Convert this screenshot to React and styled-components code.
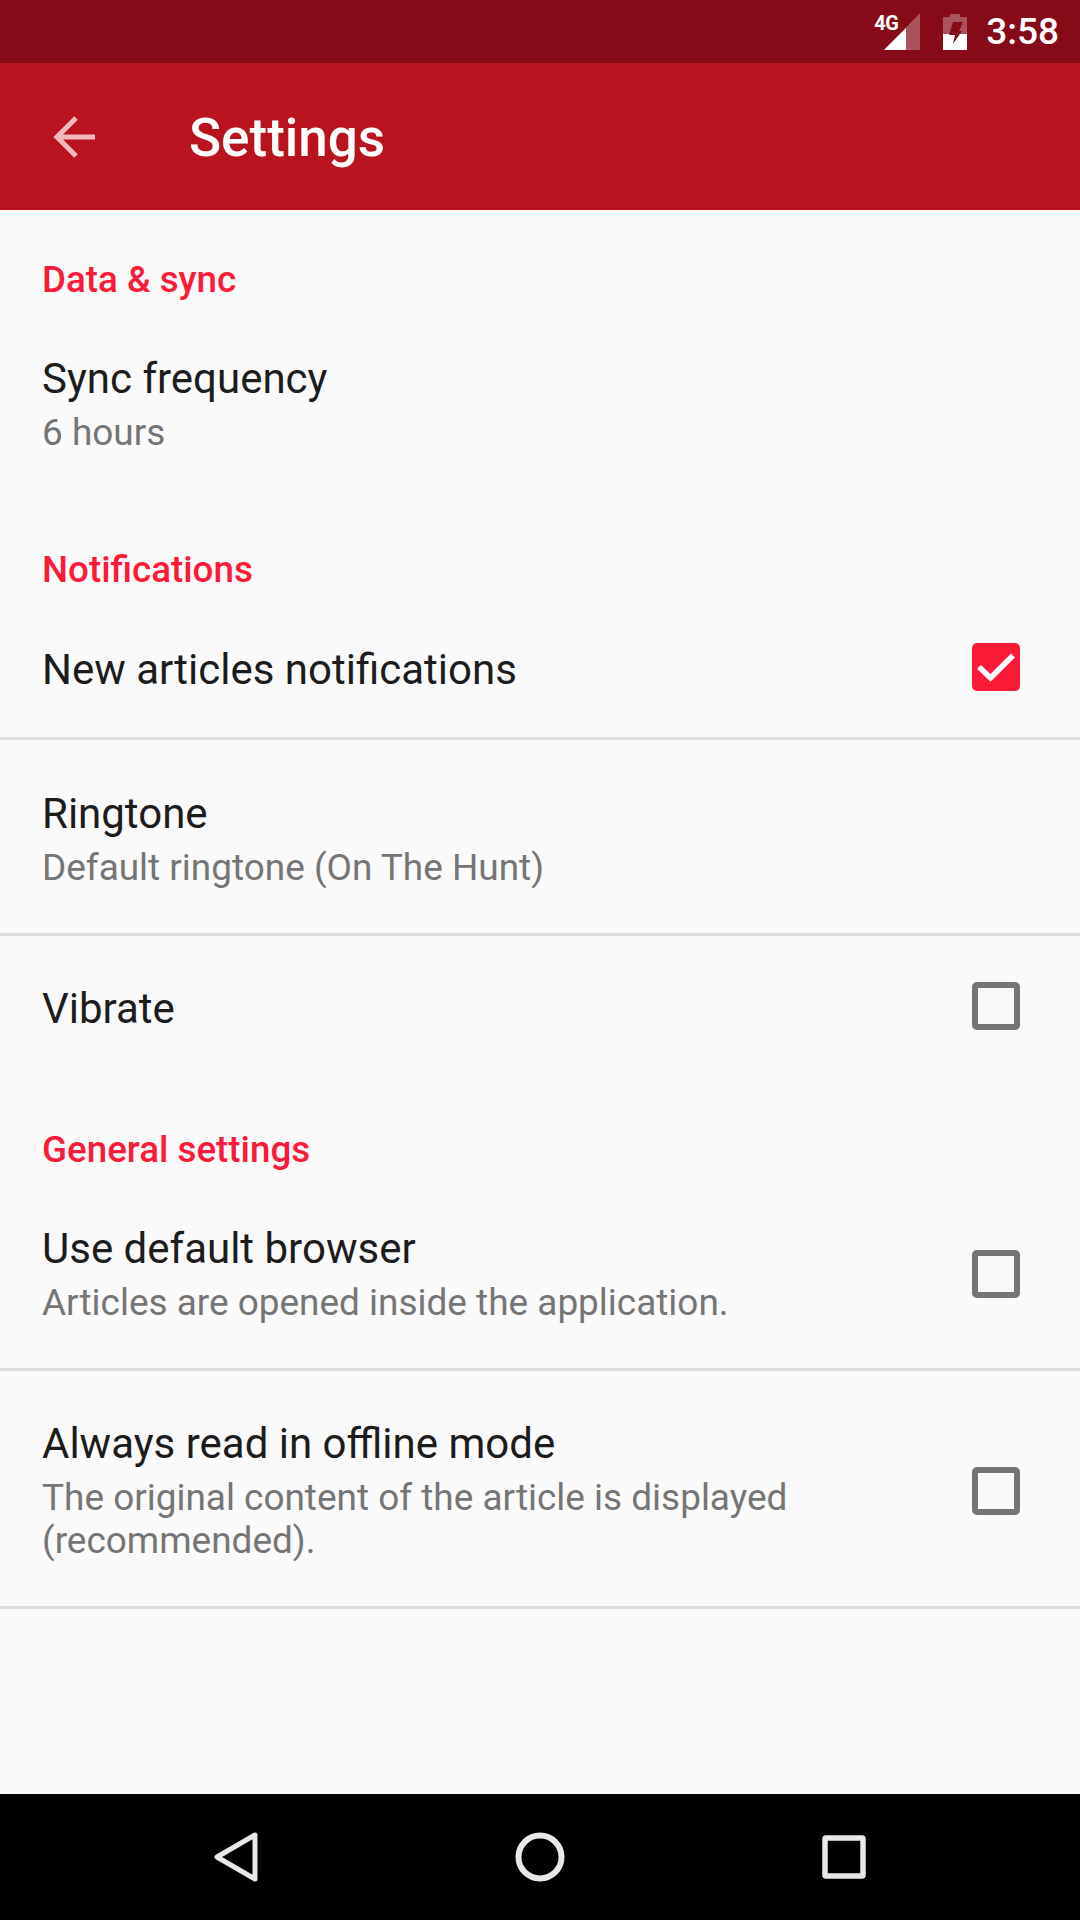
import styled, { createGlobalStyle } from "styled-components";

const GlobalStyle = createGlobalStyle`
  html, body {
    margin: 0;
    padding: 0;
    background: #fafafa;
  }
  * {
    box-sizing: border-box;
  }
`;

const SECTIONS = [
  {
    title: "Data & sync",
    rows: [{ title: "Sync frequency", summary: ["6 hours"], top: 52, bottom: 47 }],
  },
  {
    title: "Notifications",
    rows: [
      {
        title: "New articles notifications",
        check: "on",
        divider: true,
        top: 53,
        bottom: 42,
        shift: -3,
      },
      {
        title: "Ringtone",
        summary: ["Default ringtone (On The Hunt)"],
        divider: true,
        top: 49,
        bottom: 44,
      },
      { title: "Vibrate", check: "off", top: 48, bottom: 47, shift: -3 },
    ],
  },
  {
    title: "General settings",
    rows: [
      {
        title: "Use default browser",
        summary: ["Articles are opened inside the application."],
        check: "off",
        divider: true,
        top: 52,
        bottom: 44,
      },
      {
        title: "Always read in offline mode",
        summary: ["The original content of the article is displayed", "(recommended)."],
        check: "off",
        divider: true,
        top: 48,
        bottom: 44,
      },
    ],
  },
];

const Checkbox = ({ on, shift }) => (
  <CheckBox $on={on} $shift={shift || 0}>
    {on && (
      <svg width="48" height="48" viewBox="0 0 48 48">
        <path d="M7 24 L18.5 35 L41 12.5" fill="none" stroke="#fff" strokeWidth="5.5" />
      </svg>
    )}
  </CheckBox>
);

const App = () => {
  return (
    <Page>
      <GlobalStyle />
      <StatusBar>
        <SignalWrap>
          <NetType>4G</NetType>
          <svg width="38" height="38" viewBox="0 0 38 38">
            <path d="M37 0 V37 H1 Z" fill="#fff" fillOpacity="0.3" />
            <path d="M23 15 V37 H1 Z" fill="#fff" />
          </svg>
        </SignalWrap>
        <Battery>
          <svg width="26" height="38" viewBox="0 0 26 38">
            <path d="M8 1 H18 V4 H25 V37 H1 V4 H8 Z" fill="#fff" fillOpacity="0.3" />
            <path d="M1 21 H25 V37 H1 Z" fill="#fff" />
            <path d="M11 9 H21 L17 18 H20 L11 31 L13 22 H7 Z" fill="#860a18" />
          </svg>
        </Battery>
        <Clock>3:58</Clock>
      </StatusBar>
      <AppBar>
        <svg width="44" height="44" viewBox="0 0 44 44">
          <path d="M42 22 H4 M23 3 L4 22 L23 41" fill="none" stroke="#f1b9be" strokeWidth="5" />
        </svg>
        <Title>Settings</Title>
      </AppBar>
      <Content>
        {SECTIONS.map((section) => (
          <section key={section.title}>
            <SectionTitle>{section.title}</SectionTitle>
            {section.rows.map((row) => (
              <Row key={row.title} $top={row.top} $bottom={row.bottom} $divider={row.divider}>
                <RowText>
                  <RowTitle>{row.title}</RowTitle>
                  {row.summary &&
                    row.summary.map((line) => <Summary key={line}>{line}</Summary>)}
                </RowText>
                {row.check && <Checkbox on={row.check === "on"} shift={row.shift} />}
              </Row>
            ))}
          </section>
        ))}
      </Content>
      <NavBar>
        <NavSlot>
          <svg width="48" height="52" viewBox="0 0 48 52">
            <path d="M43 4 V48 L5 26 Z" fill="none" stroke="#e8e8e8" strokeWidth="5" strokeLinejoin="round" />
          </svg>
        </NavSlot>
        <NavSlot>
          <svg width="52" height="52" viewBox="0 0 52 52">
            <circle cx="26" cy="26" r="21.5" fill="none" stroke="#e8e8e8" strokeWidth="6" />
          </svg>
        </NavSlot>
        <NavSlot>
          <svg width="46" height="46" viewBox="0 0 46 46">
            <rect x="4" y="4" width="38" height="38" rx="1" fill="none" stroke="#e8e8e8" strokeWidth="5.5" />
          </svg>
        </NavSlot>
      </NavBar>
    </Page>
  );
};

const Page = styled.div`
  width: 1080px;
  height: 1920px;
  display: flex;
  flex-direction: column;
  background: #fafafa;
  font-family: Roboto, "Liberation Sans", sans-serif;
  overflow: hidden;
`;

const StatusBar = styled.div`
  height: 63px;
  flex: none;
  display: flex;
  align-items: center;
  justify-content: flex-end;
  padding-right: 21px;
  background: #860a18;
  color: #fff;
`;

const SignalWrap = styled.div`
  position: relative;
  display: flex;
  align-items: center;
`;

const NetType = styled.span`
  position: absolute;
  left: -9px;
  top: -1px;
  font-size: 20px;
  line-height: 22px;
  font-weight: 700;
  letter-spacing: -0.5px;
`;

const Battery = styled.div`
  display: flex;
  margin: 0 18px 0 21px;
`;

const Clock = styled.span`
  font-size: 37px;
  font-weight: 500;
  line-height: 63px;
`;

const AppBar = styled.header`
  height: 147px;
  flex: none;
  display: flex;
  align-items: center;
  gap: 92px;
  padding-left: 53px;
  background: #b91320;
`;

const Title = styled.h1`
  margin: 0;
  padding-top: 2px;
  font-size: 53px;
  font-weight: 500;
  color: #fff;
`;

const Content = styled.main`
  flex: 1;
  min-height: 0;
`;

const SectionTitle = styled.h2`
  margin: 0;
  padding: 47px 42px 0;
  font-size: 36.75px;
  line-height: 44px;
  font-weight: 500;
  color: #fb1a38;
  section:first-child > & {
    padding-top: 48px;
  }
`;

const Row = styled.div`
  display: flex;
  align-items: center;
  justify-content: space-between;
  padding: ${(p) => p.$top}px 60px ${(p) => p.$bottom}px 42px;
  border-bottom: ${(p) => (p.$divider ? "3px solid #dcdcdc" : "0")};
`;

const RowText = styled.div`
  min-width: 0;
`;

const RowTitle = styled.div`
  font-size: 42px;
  line-height: 50px;
  color: #1c1c1c;
`;

const Summary = styled.div`
  font-size: 36.95px;
  line-height: 42px;
  color: #757575;
  &:nth-child(2) {
    margin-top: 8px;
  }
  &:nth-child(3) {
    margin-top: 1px;
  }
`;

const CheckBox = styled.div`
  width: 48px;
  height: 48px;
  flex: none;
  border-radius: 5px;
  background: ${(p) => (p.$on ? "#fb1a38" : "transparent")};
  border: ${(p) => (p.$on ? "0" : "6px solid #757575")};
  transform: translateY(${(p) => p.$shift}px);
  svg {
    display: block;
  }
`;

const NavBar = styled.nav`
  height: 126px;
  flex: none;
  display: flex;
  align-items: center;
  justify-content: center;
  background: #000;
`;

const NavSlot = styled.div`
  width: 304px;
  display: flex;
  justify-content: center;
`;

export default App;
